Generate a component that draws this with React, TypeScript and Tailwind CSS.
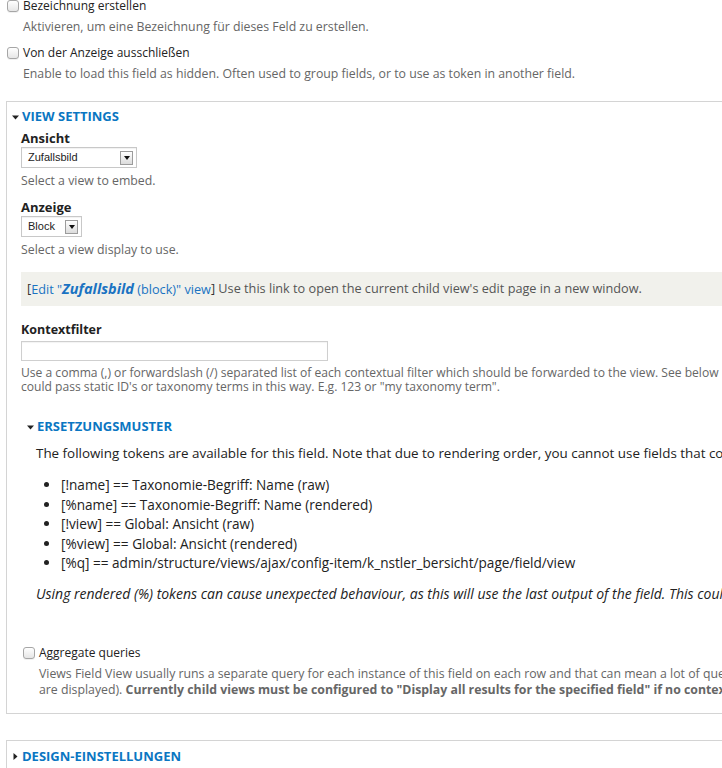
const Check = () => (
  <span className="inline-block w-[12px] h-[12px] rounded-[3px] border border-[#a6a6a6] bg-gradient-to-b from-white to-[#e6e6e6] shadow-[0_1px_0_rgba(0,0,0,0.06)] shrink-0" />
);

const Down = () => (
  <svg width="7" height="5" viewBox="0 0 7 5" className="shrink-0">
    <path d="M0 0.5 L7 0.5 L3.5 4.5 Z" fill="#222" />
  </svg>
);

const Right = () => (
  <svg width="5" height="7" viewBox="0 0 5 7" className="shrink-0">
    <path d="M0.5 0 L4.5 3.5 L0.5 7 Z" fill="#222" />
  </svg>
);

const Select = ({ label, width }: { label: string; width: string }) => (
  <div
    className={`${width} h-[21px] border border-[#c8c8c8] bg-white shadow-[inset_0_1px_1px_rgba(0,0,0,0.06)] flex items-center justify-between pl-[6px] pr-[3px] text-[11px] text-[#222] font-['Liberation_Sans',sans-serif]`}
  >
    <span>{label}</span>
    <span className="w-[13px] h-[14px] border border-[#9c9c9c] bg-gradient-to-b from-white to-[#dcdcdc] flex items-center justify-center">
      <svg width="6" height="4" viewBox="0 0 6 4">
        <path d="M0 0 L6 0 L3 4 Z" fill="#111" />
      </svg>
    </span>
  </div>
);

const tokens = [
  '[!name] == Taxonomie-Begriff: Name (raw)',
  '[%name] == Taxonomie-Begriff: Name (rendered)',
  '[!view] == Global: Ansicht (raw)',
  '[%view] == Global: Ansicht (rendered)',
  '[%q] == admin/structure/views/ajax/config-item/k_nstler_bersicht/page/field/view',
];

export default function App() {
  return (
    <div className="w-[722px] h-[768px] overflow-hidden bg-white text-[#333] font-['Open_Sans',sans-serif]">
      {/* top checkboxes */}
      <div className="-mt-[3px] pl-[7px] h-[17px] flex items-center gap-[4px] text-[12px] text-[#222] whitespace-nowrap">
        <Check />
        <span>Bezeichnung erstellen</span>
      </div>
      <div className="mt-[5px] pl-[23px] leading-[16px] text-[12.3px] text-[#666] whitespace-nowrap">
        Aktivieren, um eine Bezeichnung für dieses Feld zu erstellen.
      </div>
      <div className="mt-[9px] pl-[7px] h-[18px] flex items-center gap-[4px] text-[12px] text-[#222] whitespace-nowrap">
        <Check />
        <span>Von der Anzeige ausschließen</span>
      </div>
      <div className="mt-[4px] pl-[23px] leading-[16px] text-[12.3px] text-[#666] whitespace-nowrap">
        Enable to load this field as hidden. Often used to group fields, or to use as token in another field.
      </div>

      {/* view settings fieldset */}
      <div className="mt-[19px] ml-[6px] w-[760px] border border-[#d4d4d4] pl-[14px] pt-[7px] pb-[15px]">
        <div className="-ml-[9px] h-[16px] flex items-center gap-[3px] text-[13px] font-bold text-[#0a76c2] uppercase whitespace-nowrap">
          <Down />
          <span>View settings</span>
        </div>

        <div className="mt-[5px] leading-[16px] text-[13px] font-bold text-[#222]">Ansicht</div>
        <div className="mt-[1px]">
          <Select label="Zufallsbild" width="w-[116px]" />
        </div>
        <div className="mt-[5px] leading-[16px] text-[12.3px] text-[#666]">Select a view to embed.</div>

        <div className="mt-[10px] leading-[16px] text-[13px] font-bold text-[#222]">Anzeige</div>
        <div className="mt-[1px]">
          <Select label="Block" width="w-[61px]" />
        </div>
        <div className="mt-[5px] leading-[16px] text-[12.3px] text-[#666]">Select a view display to use.</div>

        <div className="mt-[14px] h-[34px] bg-[#f1f1ec] pl-[6px] flex items-center text-[12.7px] text-[#555] whitespace-nowrap">
          <span className="text-[#333]">[</span>
          <span className="text-[#1a73c2]">
            Edit "<span className="font-bold italic text-[14.5px]">Zufallsbild</span> (block)" view
          </span>
          <span className="text-[#333]">]</span>
          <span>&nbsp;Use this link to open the current child view's edit page in a new window.</span>
        </div>

        <div className="mt-[16px] leading-[16px] text-[12.5px] font-bold text-[#222]">Kontextfilter</div>
        <div className="mt-[3px] w-[307px] h-[20px] border border-[#cfcfcf] bg-white shadow-[inset_0_1px_1px_rgba(0,0,0,0.05)]" />
        <div className="mt-[5px] leading-[14px] text-[12.1px] text-[#666] whitespace-nowrap">
          <div>
            Use a comma (,) or forwardslash (/) separated list of each contextual filter which should be forwarded to the view. See below
          </div>
          <div>could pass static ID's or taxonomy terms in this way. E.g. 123 or "my taxonomy term".</div>
        </div>

        {/* replacement patterns */}
        <div className="mt-[25px] pl-[6px] h-[16px] flex items-center gap-[3px] text-[13px] font-bold text-[#0a76c2] uppercase whitespace-nowrap">
          <Down />
          <span>Ersetzungsmuster</span>
        </div>
        <div className="pl-[15px]">
          <div className="mt-[10px] leading-[16px] text-[13.4px] text-[#222] whitespace-nowrap">
            The following tokens are available for this field. Note that due to rendering order, you cannot use fields that come after this field
          </div>
          <ul className="mt-[14px] pl-[25px] list-disc text-[13.6px] text-[#222] whitespace-nowrap">
            {tokens.map((t) => (
              <li key={t} className="leading-[19.5px]">
                {t}
              </li>
            ))}
          </ul>
          <div className="mt-[13px] leading-[16px] text-[14px] italic text-[#222] whitespace-nowrap">
            Using rendered (%) tokens can cause unexpected behaviour, as this will use the last output of the field. This could be
          </div>
        </div>

        {/* aggregate */}
        <div className="mt-[43px] pl-[2px] h-[16px] flex items-center gap-[4px] text-[12px] text-[#222] whitespace-nowrap">
          <Check />
          <span>Aggregate queries</span>
        </div>
        <div className="mt-[5px] pl-[18px] leading-[16px] text-[12.3px] text-[#666] whitespace-nowrap">
          <div>
            Views Field View usually runs a separate query for each instance of this field on each row and that can mean a lot of queries
          </div>
          <div>
            are displayed). <span className="font-bold">Currently child views must be configured to "Display all results for the specified field" if no contextual</span>
          </div>
        </div>
      </div>

      {/* design settings */}
      <div className="mt-[26px] ml-[6px] w-[760px] border border-[#d4d4d4] pl-[14px] pt-[8px] pb-[12px]">
        <div className="-ml-[8px] h-[16px] flex items-center gap-[4px] text-[13px] font-bold text-[#0a76c2] uppercase whitespace-nowrap">
          <Right />
          <span>Design-Einstellungen</span>
        </div>
      </div>
    </div>
  );
}
